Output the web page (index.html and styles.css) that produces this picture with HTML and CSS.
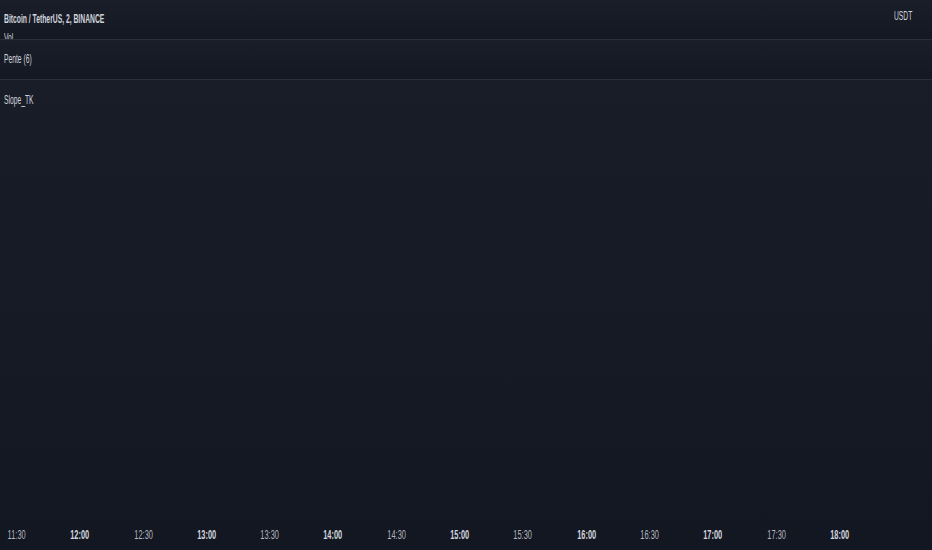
FILE: index.html
```html
<!DOCTYPE html>
<html lang="en">
<head>
  <meta charset="UTF-8">
  <title>Bitcoin / TetherUS</title>
  <link rel="stylesheet" href="styles.css">
</head>
<body>
<div class="chart">
  <div class="pane pane-top">
    <div class="legend">
      <div class="title">Bitcoin / TetherUS, 2, BINANCE</div>
      <div class="study">Vol</div>
    </div>
    <div class="scale">USDT</div>
  </div>
  <div class="pane pane-mid">
    <div class="legend">
      <div class="study">Pente (6)</div>
    </div>
  </div>
  <div class="pane pane-main">
    <div class="legend">
      <div class="study">Slope_TK</div>
    </div>
  </div>
  <div class="axis">
    <span>11:30</span>
    <span class="hour">12:00</span>
    <span>12:30</span>
    <span class="hour">13:00</span>
    <span>13:30</span>
    <span class="hour">14:00</span>
    <span>14:30</span>
    <span class="hour">15:00</span>
    <span>15:30</span>
    <span class="hour">16:00</span>
    <span>16:30</span>
    <span class="hour">17:00</span>
    <span>17:30</span>
    <span class="hour">18:00</span>
  </div>
</div>
</body>
</html>
```

FILE: styles.css
```css
* {
  padding: 0;
  margin: 0;
  box-sizing: border-box;
}

body {
  background: #151924;
  font-family: "Liberation Sans", sans-serif;
  color: #d1d4dc;
}

.chart {
  width: 932px;
  height: 550px;
  display: flex;
  flex-direction: column;
  background: linear-gradient(#1a1e29, #131722);
}

.pane {
  display: flex;
  justify-content: space-between;
  overflow: hidden;
  border-bottom: 1px solid #2a2e39;
  background: linear-gradient(#1a1e29, #141823);
}

.pane-top {
  height: 40px;
}

.pane-mid {
  height: 40px;
}

.pane-main {
  flex: 1;
  border-bottom: 0;
  background: transparent;
}

/* the chart font is very narrow, squeeze the text */
.legend {
  margin-left: 4px;
  padding-top: 12px;
  font-size: 12px;
  line-height: 14px;
  transform: scaleX(0.56);
  transform-origin: left top;
  white-space: nowrap;
}

.pane-mid .legend {
  padding-top: 12px;
}

.pane-main .legend {
  padding-top: 13px;
}

.title {
  font-size: 13px;
  font-weight: bold;
  margin-bottom: 5px;
  transform: scaleX(0.93);
  transform-origin: left top;
}

.scale {
  width: 38px;
  padding-top: 9px;
  font-size: 12px;
  line-height: 14px;
  transform: scaleX(0.56);
  transform-origin: left top;
}

.axis {
  height: 35px;
  display: flex;
  font-size: 12px;
  color: #b2b5be;
}

.axis span {
  width: 63.3px;
  text-align: center;
  padding-top: 13px;
  flex: none;
  transform: scaleX(0.62);
}

.axis span:first-child {
  margin-left: -15px;
}

.axis .hour {
  font-weight: bold;
  color: #d1d4dc;
}
```
